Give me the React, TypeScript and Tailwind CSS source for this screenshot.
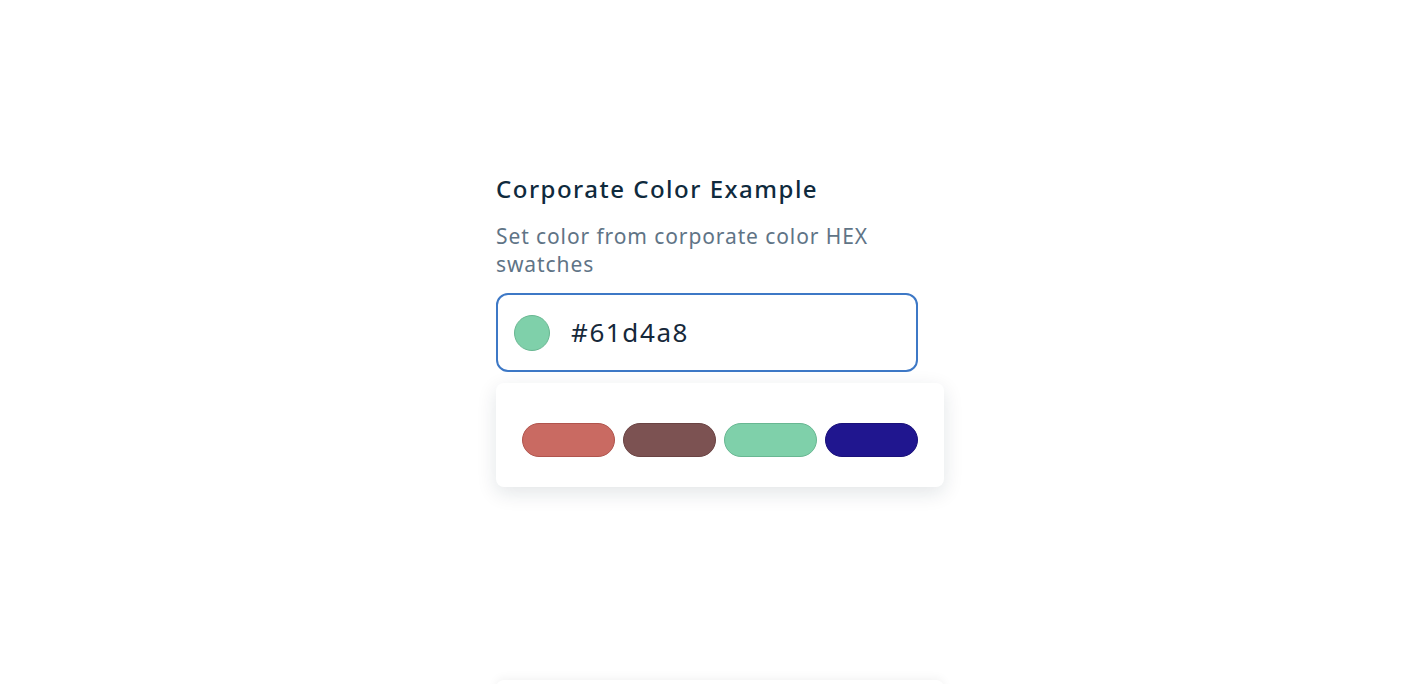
const SWATCHES = [
  { hex: '#c96a62', ring: '#b0544d' },
  { hex: '#7c5252', ring: '#6a4343' },
  { hex: '#7fd0aa', ring: '#68b792' },
  { hex: '#20168f', ring: '#1a117a' },
]

export default function App() {
  return (
    <div className="h-[684px] bg-white font-['Noto_Sans',sans-serif] overflow-hidden">
      <div className="pl-[496px] pt-[173px]">
        <h1 className="text-[24px] leading-[32px] font-medium tracking-[1.5px] text-[#0f2a3d]">
          Corporate Color Example
        </h1>
        <p className="mt-[17px] w-[430px] text-[21px] leading-[28px] tracking-[0.9px] text-[#5f7486]">
          Set color from corporate color HEX swatches
        </p>

        <div className="mt-[15px] flex h-[79px] w-[422px] items-center rounded-xl border-2 border-[#3d78c6] pl-[16px]">
          <span className="h-[36px] w-[36px] rounded-full border border-[#69b792] bg-[#7fd0aa]" />
          <span className="ml-[21px] text-[26px] tracking-[1.6px] text-[#16283a]">#61d4a8</span>
        </div>

        <div className="mt-[11px] w-[448px] rounded-lg bg-white px-[26px] pb-[30px] pt-[40px] shadow-[0_6px_20px_rgba(15,40,60,0.12)]">
          <div className="flex gap-[8px]">
            {SWATCHES.map((s) => (
              <button
                key={s.hex}
                className="h-[34px] w-[93px] rounded-full border"
                style={{ backgroundColor: s.hex, borderColor: s.ring }}
              />
            ))}
          </div>
        </div>

        <div className="mt-[193px] h-[40px] w-[448px] rounded-lg bg-white shadow-[0_-2px_10px_rgba(0,0,0,0.05)]" />
      </div>
    </div>
  )
}
